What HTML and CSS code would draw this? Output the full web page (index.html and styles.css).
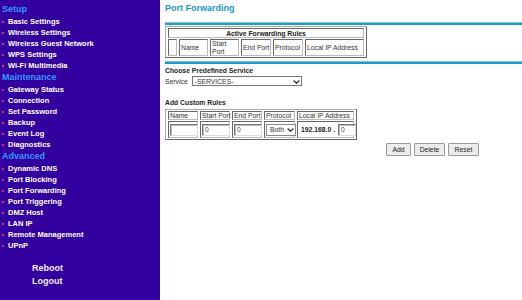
FILE: index.html
```html
<!DOCTYPE html>
<html lang="en">
<head>
    <meta charset="UTF-8">
    <meta name="viewport" content="width=device-width, initial-scale=1.0">
    <title>Port Forwarding</title>
    <link rel="stylesheet" href="styles.css">
</head>
<body>
    <nav class="sidebar">
        <div class="menu-head">Setup</div>
        <ul class="menu">
            <li>Basic Settings</li>
            <li>Wireless Settings</li>
            <li>Wireless Guest Network</li>
            <li>WPS Settings</li>
            <li>Wi-Fi Multimedia</li>
        </ul>
        <div class="menu-head">Maintenance</div>
        <ul class="menu">
            <li>Gateway Status</li>
            <li>Connection</li>
            <li>Set Password</li>
            <li>Backup</li>
            <li>Event Log</li>
            <li>Diagnostics</li>
        </ul>
        <div class="menu-head">Advanced</div>
        <ul class="menu">
            <li>Dynamic DNS</li>
            <li>Port Blocking</li>
            <li>Port Forwarding</li>
            <li>Port Triggering</li>
            <li>DMZ Host</li>
            <li>LAN IP</li>
            <li>Remote Management</li>
            <li>UPnP</li>
        </ul>
        <div class="actions">
            <a href="#">Reboot</a>
            <a href="#">Logout</a>
        </div>
    </nav>

    <main class="content">
        <h1 class="page-title">Port Forwarding</h1>
        <div class="rule"></div>

        <table class="grid active-rules">
            <colgroup>
                <col class="w-sel"><col class="w-29"><col class="w-29"><col class="w-30"><col class="w-30"><col>
            </colgroup>
            <tr><th colspan="6">Active Forwarding Rules</th></tr>
            <tr class="tall">
                <td></td>
                <td>Name</td>
                <td>Start<br>Port</td>
                <td>End Port</td>
                <td>Protocol</td>
                <td>Local IP Address</td>
            </tr>
        </table>

        <div class="rule rule-bottom"></div>

        <h2 class="section-title">Choose Predefined Service</h2>
        <div class="service-row">
            <label for="service">Service</label>
            <span class="select-wrap">
                <select id="service" class="dropdown service-select">
                    <option>-SERVICES-</option>
                </select>
                <svg width="7" height="4" viewBox="0 0 7 4"><path d="M0.6 0.5 L3.5 3.3 L6.4 0.5" fill="none" stroke="#333" stroke-width="1.2"/></svg>
            </span>
        </div>

        <h2 class="section-title custom-title">Add Custom Rules</h2>
        <table class="grid custom-rules">
            <colgroup>
                <col class="w-30"><col class="w-30"><col class="w-30"><col class="w-31"><col>
            </colgroup>
            <tr class="head">
                <td>Name</td>
                <td>Start Port</td>
                <td>End Port</td>
                <td>Protocol</td>
                <td>Local IP Address</td>
            </tr>
            <tr class="inputs">
                <td><input type="text" class="field"></td>
                <td><input type="text" class="field" value="0"></td>
                <td><input type="text" class="field" value="0"></td>
                <td>
                    <span class="select-wrap">
                        <select class="dropdown proto-select">
                            <option>Both</option>
                            <option>TCP</option>
                            <option>UDP</option>
                        </select>
                        <svg width="7" height="4" viewBox="0 0 7 4"><path d="M0.6 0.5 L3.5 3.3 L6.4 0.5" fill="none" stroke="#333" stroke-width="1.2"/></svg>
                    </span>
                </td>
                <td class="ip-cell"><b>192.168.0 .</b> <input type="text" class="field ip-field" value="0"></td>
            </tr>
        </table>

        <div class="buttons">
            <button type="button">Add</button>
            <button type="button" class="wide">Delete</button>
            <button type="button" class="wide">Reset</button>
        </div>
    </main>
</body>
</html>
```

FILE: styles.css
```css
body {
    margin: 0;
    font-family: "Liberation Sans", Arial, sans-serif;
    background-color: #fff;
    display: flex;
    height: 300px;
    overflow: hidden;
}
.sidebar {
    width: 160px;
    flex: none;
    background-color: #3300a0;
    padding-top: 3px;
    box-sizing: border-box;
}
.menu-head {
    color: #3399ff;
    font-weight: bold;
    font-size: 9px;
    line-height: 13px;
    padding-left: 2px;
}
.menu {
    list-style: none;
    margin: 0;
    padding: 0;
}
.menu li {
    display: flex;
    align-items: center;
    padding-left: 2px;
    color: #fff;
    font-weight: bold;
    font-size: 7.5px;
    line-height: 11px;
}
.menu li::before {
    content: "";
    width: 2px;
    height: 2px;
    margin-right: 4px;
    background-color: #d8306c;
}
.actions {
    margin-top: 11px;
    padding-left: 32px;
}
.actions a {
    display: block;
    color: #f0ecff;
    text-decoration: none;
    font-weight: bold;
    font-size: 9px;
    line-height: 13px;
}

.content {
    flex: 1;
    padding: 2px 0 0 5px;
    color: #333;
    font-size: 6.8px;
}
.page-title {
    margin: 0;
    color: #1b95c2;
    font-size: 9px;
    line-height: 12px;
}
.rule {
    margin-top: 8px;
    height: 2px;
    background-color: #2599c6;
    border-top: 1px solid #7cc6e2;
}
.rule-bottom {
    margin-top: 3px;
}
.grid {
    border-collapse: separate;
    border-spacing: 2px 1px;
    border: 1px solid;
    border-color: #aaa #666 #666 #aaa;
    table-layout: fixed;
    font-size: 6.8px;
}
.grid th,
.grid td {
    border: 1px solid;
    border-color: #666 #bbb #bbb #666;
    padding: 0 2px;
    text-align: left;
    vertical-align: middle;
    white-space: nowrap;
}
.active-rules {
    width: 202px;
    margin-top: 1px;
}
.active-rules th {
    height: 8px;
    text-align: center;
    font-size: 6.8px;
    color: #222;
}
.active-rules .tall td {
    height: 15px;
    line-height: 7.5px;
    padding: 0 1px;
}
.w-sel { width: 9px; }
.w-29 { width: 29px; }
.w-30 { width: 30px; }
.w-31 { width: 31px; }

.section-title {
    margin: 2px 0 0;
    font-size: 6.8px;
    line-height: 9px;
    color: #222;
}
.custom-title {
    margin-top: 12px;
}
.service-row {
    display: flex;
    align-items: center;
    gap: 4px;
    margin-top: 1px;
}
.select-wrap {
    position: relative;
    display: inline-block;
}
.select-wrap svg {
    position: absolute;
    right: 2px;
    top: 3.5px;
    pointer-events: none;
}
.dropdown {
    appearance: none;
    -webkit-appearance: none;
    box-sizing: border-box;
    display: block;
    height: 10px;
    margin: 0;
    padding: 0 0 0 2px;
    border: 1px solid #777;
    border-radius: 0;
    background-color: #fff;
    font-family: "Liberation Sans", Arial, sans-serif;
    font-size: 6.8px;
    color: #333;
}
.service-select {
    width: 110px;
}
.custom-rules {
    width: 192px;
    margin-top: 2px;
}
.custom-rules .head td {
    height: 7px;
    line-height: 7px;
    padding: 0 1px;
}
.custom-rules .inputs td {
    height: 15px;
    padding: 0 1px;
}
.field {
    box-sizing: border-box;
    width: 28px;
    height: 12px;
    margin: 0;
    padding: 0 2px;
    border: 1px solid;
    border-color: #777 #ddd #ddd #777;
    box-shadow: inset 1px 1px 0 #bbb;
    font-family: "Liberation Sans", Arial, sans-serif;
    font-size: 6.8px;
    color: #444;
}
.proto-select {
    width: 30px;
    height: 12px;
    border-color: #888;
    padding-left: 3px;
}
.proto-select + svg {
    top: 4px;
}
.ip-cell {
    padding-left: 3px !important;
}
.ip-cell b {
    font-size: 6.8px;
    color: #222;
}
.ip-field {
    width: 18px;
    vertical-align: middle;
    margin-left: 1px;
}
.buttons {
    display: flex;
    gap: 3px;
    margin: 3px 0 0 221px;
}
.buttons button {
    height: 13px;
    width: 25px;
    padding: 0;
    border: 1px solid #999;
    border-radius: 1px;
    background-color: #ececec;
    font-family: "Liberation Sans", Arial, sans-serif;
    font-size: 6.8px;
    color: #222;
}
.buttons .wide {
    width: 31px;
}
```
